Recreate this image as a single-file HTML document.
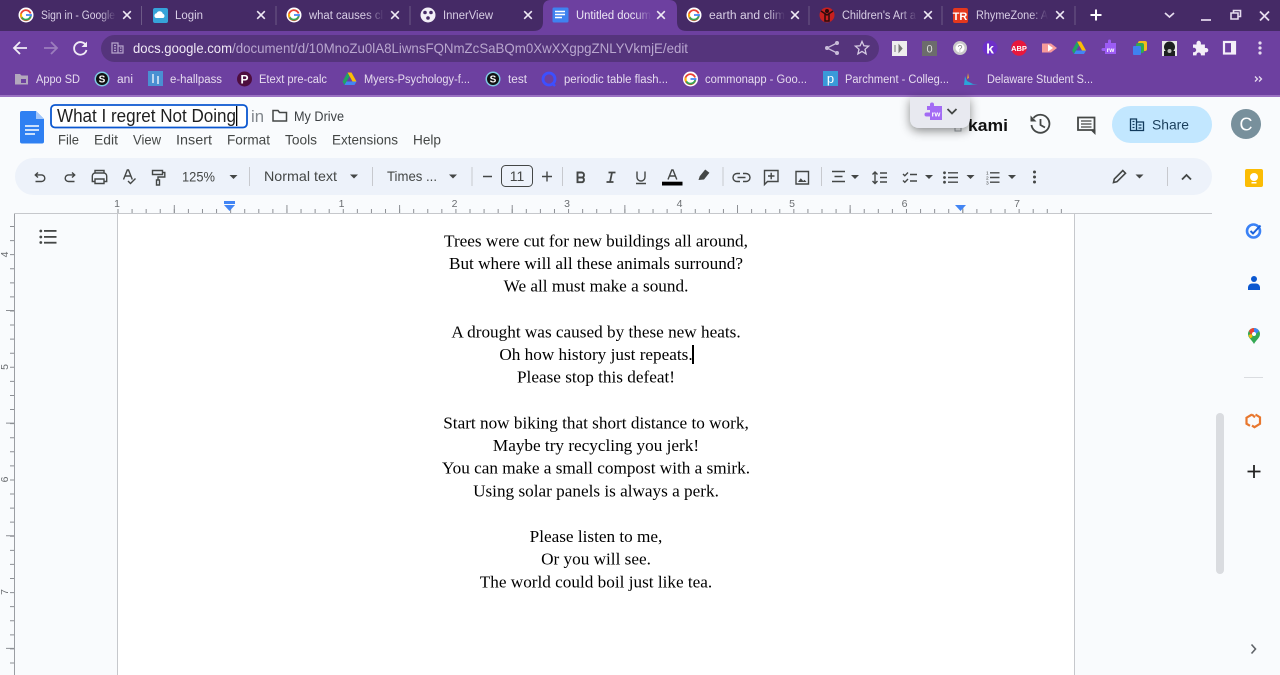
<!DOCTYPE html>
<html><head><meta charset="utf-8"><title>What I regret Not Doing</title>
<style>
html,body{margin:0;padding:0;width:1280px;height:675px;overflow:hidden;background:#f9fbfd}
svg{display:block;position:absolute;left:0;top:0}
text{font-family:"Liberation Sans",sans-serif}
.tab{fill:#d9cfe6;font-size:11.5px}
.bm{fill:#e6dcef;font-size:11.5px}
.menu{fill:#444746;font-size:14px}
.tb{fill:#444746;font-size:14px}
.ic{fill:none;stroke:#444746;stroke-width:1.4}
.x{stroke:#efe9f5;stroke-width:1.6;fill:none}
.sep{stroke:#6d5a86;stroke-width:1}
.tsep{stroke:#c7c9ce;stroke-width:1}
.car{fill:#444746}
.doc text{font-family:"Liberation Serif",serif;font-size:17.2px;fill:#000;text-anchor:middle}
.rn{fill:#6b6e72;font-size:10.5px;text-anchor:middle}
</style></head><body>
<svg width="1280" height="675" viewBox="0 0 1280 675" xmlns="http://www.w3.org/2000/svg">
<defs>
<linearGradient id="f1" x1="0" x2="1" y1="0" y2="0"><stop offset="0" stop-color="#452a66" stop-opacity="0"/><stop offset="1" stop-color="#452a66"/></linearGradient>
<linearGradient id="f2" x1="0" x2="1" y1="0" y2="0"><stop offset="0" stop-color="#6d40a0" stop-opacity="0"/><stop offset="1" stop-color="#6d40a0"/></linearGradient>
<filter id="sh" x="-40%" y="-40%" width="180%" height="200%"><feDropShadow dx="0" dy="3" stdDeviation="5" flood-color="#000" flood-opacity=".45"/></filter>
<g id="gl"><circle cx="0" cy="0" r="7.5" fill="#fff"/><path d="M4.6-1.5A5 5 0 1 0 4.8 1" fill="none" stroke="#ea4335" stroke-width="1.8"/><path d="M-4.7-1.4A5 5 0 0 0-4.2 2.4" fill="none" stroke="#fbbc05" stroke-width="1.8"/><path d="M-4.2 2.4A5 5 0 0 0 4.7 1.2" fill="none" stroke="#34a853" stroke-width="1.8"/><path d="M0 0H5V1.2" fill="none" stroke="#4285f4" stroke-width="1.8"/></g>
<g id="sch"><circle r="7.5" fill="#7ec8e3"/><circle r="6" fill="#111"/><text x="0" y="3.5" font-size="10" font-weight="bold" fill="#fff" text-anchor="middle">S</text></g>
<g id="x"><path class="x" d="M-3.8-3.8L3.8 3.8M3.8-3.8L-3.8 3.8"/></g>
<path id="c" d="M-4-2H4L0 2Z"/>
<g id="dr"><path d="M-2-6.5H2L7 2.5H3Z" fill="#fbbc05"/><path d="M-2-6.5L-7 2.5L-5 6L0-2.5Z" fill="#1fa463"/><path d="M-5 6H5L7 2.5H-3Z" fill="#4285f4"/></g>
</defs>

<!-- chrome -->
<rect width="1280" height="31" fill="#452a66"/>
<rect y="31" width="1280" height="65" fill="#6d40a0"/>
<rect y="95" width="1280" height="2" fill="#9a72c2"/>
<path d="M533 31Q543 31 543 22V8Q543 0 551 0H669Q677 0 677 8V22Q677 31 687 31Z" fill="#6d40a0"/>

<!-- tabs -->
<use href="#gl" x="26" y="15"/>
<text class="tab" x="41" y="19" textLength="74" lengthAdjust="spacingAndGlyphs">Sign in - Google</text><rect x="100" y="5" width="16" height="20" fill="url(#f1)"/>
<use href="#x" x="127" y="15"/><line class="sep" x1="141.5" y1="6" x2="141.5" y2="25"/>
<rect x="153" y="8" width="15" height="15" rx="2" fill="#36a3d9"/><path d="M156 18a2.5 2.5 0 0 1 .6-4.8 3.3 3.3 0 0 1 6.2.6 2.2 2.2 0 0 1 .2 4.2Z" fill="#fff"/>
<text class="tab" x="175" y="19" textLength="28" lengthAdjust="spacingAndGlyphs">Login</text>
<use href="#x" x="261" y="15"/><line class="sep" x1="276" y1="6" x2="276" y2="25"/>
<use href="#gl" x="294" y="15"/>
<text class="tab" x="309" y="19" textLength="74" lengthAdjust="spacingAndGlyphs">what causes cl</text><rect x="366" y="5" width="18" height="20" fill="url(#f1)"/>
<use href="#x" x="395" y="15"/><line class="sep" x1="410" y1="6" x2="410" y2="25"/>
<circle cx="428" cy="15" r="7.5" fill="#f2eef7"/><circle cx="425" cy="12.5" r="1.8" fill="#452a66"/><circle cx="431" cy="12.5" r="1.8" fill="#452a66"/><circle cx="428" cy="18" r="1.8" fill="#452a66"/>
<text class="tab" x="443" y="19" textLength="50" lengthAdjust="spacingAndGlyphs">InnerView</text>
<use href="#x" x="528" y="15"/>
<path d="M554 7.5h13a1.5 1.5 0 0 1 1.500 1.500v12a1.500 1.500 0 0 1-1.500 1.500h-13a1.500 1.500 0 0 1-1.500-1.500v-12a1.500 1.500 0 0 1 1.500-1.500Z" fill="#3f82f0"/><path d="M555 11.500h10M555 14.500h10M555 17.500h7" stroke="#fff" stroke-width="1.500"/>
<text class="tab" x="576" y="19" textLength="75" lengthAdjust="spacingAndGlyphs" style="fill:#eee7f5">Untitled docum</text><rect x="634" y="5" width="17" height="20" fill="url(#f2)"/>
<use href="#x" x="661" y="15"/>
<use href="#gl" x="694" y="15"/>
<text class="tab" x="709" y="19" textLength="76" lengthAdjust="spacingAndGlyphs">earth and clim</text><rect x="768" y="5" width="17" height="20" fill="url(#f1)"/>
<use href="#x" x="795" y="15"/><line class="sep" x1="809" y1="6" x2="809" y2="25"/>
<circle cx="827" cy="15" r="7.500" fill="#c8201f"/><circle cx="827" cy="11" r="2" fill="#2b0b0b"/><path d="M821 11L827 15L833 11M825 14V21H829V14" stroke="#2b0b0b" stroke-width="1.500" fill="none"/>
<text class="tab" x="842" y="19" textLength="74" lengthAdjust="spacingAndGlyphs">Children's Art a</text><rect x="900" y="5" width="17" height="20" fill="url(#f1)"/>
<use href="#x" x="928" y="15"/><line class="sep" x1="942" y1="6" x2="942" y2="25"/>
<rect x="953" y="8" width="15" height="15" rx="2" fill="#e5381d"/><text x="960" y="20" font-size="11" font-weight="bold" fill="#fff" text-anchor="middle">TR</text>
<text class="tab" x="976" y="19" textLength="72" lengthAdjust="spacingAndGlyphs">RhymeZone: A</text><rect x="1030" y="5" width="18" height="20" fill="url(#f1)"/>
<use href="#x" x="1060" y="15"/><line class="sep" x1="1075" y1="6" x2="1075" y2="25"/>
<path d="M1096 9.500V20.500M1090.500 15H1101.500" stroke="#fff" stroke-width="2" fill="none"/>
<path d="M1165 13L1169.500 17L1174 13" stroke="#e6dcef" stroke-width="1.700" fill="none"/>
<path d="M1201 20H1211" stroke="#e6dcef" stroke-width="1.700"/>
<path d="M1231 13h7v6h-7ZM1233.500 13v-2.500h7v6h-2.500" stroke="#e6dcef" stroke-width="1.600" fill="none"/>
<path d="M1260 11.500L1269 20.500M1269 11.500L1260 20.500" stroke="#e6dcef" stroke-width="1.800"/>

<!-- omnibar -->
<path d="M27 48H14M20 42L14 48L20 54" stroke="#f1ecf6" stroke-width="1.800" fill="none"/>
<path d="M57 48H44M51 42L57 48L51 54" stroke="#9c7dbd" stroke-width="1.800" fill="none"/>
<path d="M86 45.500A6.300 6.300 0 1 0 86.500 50" stroke="#f1ecf6" stroke-width="1.800" fill="none"/><path d="M87 41.500V47H81.500Z" fill="#f1ecf6"/>
<rect x="101" y="35" width="778" height="27" rx="13.500" fill="#55347c"/>
<path d="M112 43H118V53H112ZM118 46H123V53H118ZM114 45.500h2M114 48h2M114 50.500h2M120 48h1.500M120 50.500h1.500" stroke="#b7a5cc" stroke-width="1.200" fill="none"/>
<text x="133" y="53" font-size="14" fill="#f0e9f6" textLength="99" lengthAdjust="spacingAndGlyphs">docs.google.com</text>
<text x="232" y="53" font-size="14" fill="#b9a7cf" textLength="456" lengthAdjust="spacingAndGlyphs">/document/d/10MnoZu0lA8LiwnsFQNmZcSaBQm0XwXXgpgZNLYVkmjE/edit</text>
<g fill="#c9bcd9"><circle cx="827" cy="48" r="2"/><circle cx="837" cy="43" r="2"/><circle cx="837" cy="53" r="2"/></g><path d="M837 43L827 48L837 53" stroke="#c9bcd9" stroke-width="1.300" fill="none"/>
<path d="M862 41.500l1.900 4.300 4.700.4-3.600 3.100 1.100 4.600-4.100-2.500-4.100 2.500 1.100-4.600-3.600-3.100 4.700-.4Z" stroke="#d5cae2" stroke-width="1.300" fill="none"/>

<!-- extensions -->
<rect x="892" y="41" width="15" height="15" fill="#eee"/><path d="M895 45v7M899 45v7l3-3.500z" stroke="#777" fill="#777"/>
<rect x="922" y="41" width="15" height="15" fill="#6c6c6c"/><text x="929.500" y="52.500" font-size="11" fill="#ddd" text-anchor="middle">0</text>
<circle cx="960" cy="48" r="7" fill="#c9c9c9"/><circle cx="960" cy="48" r="4.500" fill="#fff"/><text x="960" y="51.500" font-size="9" fill="#888" text-anchor="middle">?</text>
<circle cx="990" cy="48" r="7.500" fill="#6d2fc9"/><text x="990" y="53.500" font-size="14" font-weight="bold" fill="#fff" text-anchor="middle">k</text>
<circle cx="1019" cy="48" r="7.800" fill="#e8183d"/><text x="1019" y="51" font-size="7.500" font-weight="bold" fill="#fff" text-anchor="middle">ABP</text>
<path d="M1042 43.500H1051L1057 48L1051 52.500H1042Z" fill="#f79a9a"/><path d="M1048 44.500L1053 48L1048 51.500Z" fill="#fff"/>
<use href="#dr" x="1079" y="48"/>
<path d="M1105 43h3v-2a1.500 1.500 0 0 1 3 0v2h5v11h-11v-3h-2a1.500 1.500 0 0 1 0-3h2Z" fill="#9c5cf5"/><text x="1110.500" y="52" font-size="6.500" font-weight="bold" fill="#fff" text-anchor="middle">rw</text>
<rect x="1138" y="41" width="9" height="10" rx="2" fill="#f2bc1b"/><rect x="1136" y="43" width="8" height="10" rx="2" fill="#32a852"/><rect x="1133" y="46" width="8" height="9" rx="1" fill="#3f82f0"/>
<rect x="1162" y="41" width="15" height="15" fill="#e8e8e8"/><circle cx="1169.500" cy="47" r="5.500" fill="#1c2020"/><path d="M1164 56v-5h11v5Z" fill="#1c2020"/><circle cx="1169.500" cy="51" r="2" fill="#bbb"/>
<path d="M1193 44.500h3.500v-1.500a2.200 2.200 0 0 1 4.400 0v1.500h4v3.500h1.200a2.200 2.200 0 0 1 0 4.400h-1.200v3h-4v-.7a2.200 2.200 0 0 0-4.400 0v.7h-3.500v-3.200h1a2.200 2.200 0 0 0 0-4.400h-1Z" fill="#f4eff8"/>
<rect x="1224" y="42" width="11" height="11.500" fill="none" stroke="#f4eff8" stroke-width="2.200"/><rect x="1231" y="42" width="4" height="11.500" fill="#f4eff8"/>
<g fill="#e6dcef"><circle cx="1260" cy="43" r="1.600"/><circle cx="1260" cy="48" r="1.600"/><circle cx="1260" cy="53" r="1.600"/></g>

<!-- bookmarks -->
<path d="M15 74h5l1.500 1.500H28v9H15Z" fill="#b3a8bd"/><path d="M21 79h5v4h-5Z" fill="#6d40a0"/>
<text class="bm" x="36" y="83" textLength="44" lengthAdjust="spacingAndGlyphs">Appo SD</text>
<use href="#sch" x="102" y="79"/><text class="bm" x="117" y="83" textLength="16" lengthAdjust="spacingAndGlyphs">ani</text>
<rect x="148" y="71" width="15" height="15" fill="#4a90d2"/><path d="M153 74v9M158 76v8" stroke="#e5eef7" stroke-width="1.500"/>
<text class="bm" x="170" y="83" textLength="52" lengthAdjust="spacingAndGlyphs">e-hallpass</text>
<circle cx="244.500" cy="79" r="7.500" fill="#4e0d3e"/><text x="244.500" y="83.500" font-size="12" font-weight="bold" fill="#fff" text-anchor="middle">P</text>
<text class="bm" x="259" y="83" textLength="68" lengthAdjust="spacingAndGlyphs">Etext pre-calc</text>
<use href="#dr" x="349.500" y="79"/>
<text class="bm" x="364" y="83" textLength="106" lengthAdjust="spacingAndGlyphs">Myers-Psychology-f...</text>
<use href="#sch" x="493" y="79"/><text class="bm" x="508" y="83" textLength="19" lengthAdjust="spacingAndGlyphs">test</text>
<circle cx="549" cy="79" r="6" fill="none" stroke="#3d4fff" stroke-width="2.800"/><path d="M552 83l3 3" stroke="#3d4fff" stroke-width="2.500"/>
<text class="bm" x="564" y="83" textLength="104" lengthAdjust="spacingAndGlyphs">periodic table flash...</text>
<use href="#gl" x="690.500" y="79"/>
<text class="bm" x="705" y="83" textLength="102" lengthAdjust="spacingAndGlyphs">commonapp - Goo...</text>
<rect x="823" y="71" width="15" height="15" fill="#3a9ad9"/><text x="830.500" y="83" font-size="13" fill="#fff" text-anchor="middle">p</text>
<text class="bm" x="845" y="83" textLength="104" lengthAdjust="spacingAndGlyphs">Parchment - Colleg...</text>
<path d="M965 76l2 5 6 3h5l-8 1h-6Z" fill="#2aa5d9"/><path d="M968 73l1 5-2 1Z" fill="#e9a23b"/>
<text class="bm" x="987" y="83" textLength="106" lengthAdjust="spacingAndGlyphs">Delaware Student S...</text>
<path d="M1255 76.500l2.500 2.500-2.500 2.500M1259 76.500l2.500 2.500-2.500 2.500" stroke="#e6dcef" stroke-width="1.300" fill="none"/>

<!-- docs header -->
<path d="M22 111h14l8 8v22.500a2 2 0 0 1-2 2H22a2 2 0 0 1-2-2V113a2 2 0 0 1 2-2Z" fill="#2f80f2"/><path d="M36 111l8 8h-8Z" fill="#a3c7fa"/><path d="M25 126h14M25 130h14M25 134h10" stroke="#fff" stroke-width="1.600"/>
<rect x="51" y="105" width="196" height="22.500" rx="4" fill="#fff" stroke="#0b57d0" stroke-width="1.800"/>
<text x="57" y="122" font-size="18" fill="#1f1f1f" textLength="179" lengthAdjust="spacingAndGlyphs">What I regret Not Doing</text>
<rect x="236" y="106" width="1.300" height="20" fill="#000"/>
<text x="251" y="122" font-size="17" fill="#80868b" textLength="13" lengthAdjust="spacingAndGlyphs">in</text>
<path d="M273 110.500h5l1.500 2h7v8.500h-13.500Z" fill="none" stroke="#444746" stroke-width="1.500"/>
<text x="294" y="121" font-size="14" fill="#3c4043" textLength="50" lengthAdjust="spacingAndGlyphs">My Drive</text>
<g class="menu">
<text x="58" y="144.500" textLength="21" lengthAdjust="spacingAndGlyphs">File</text>
<text x="94" y="144.500" textLength="24" lengthAdjust="spacingAndGlyphs">Edit</text>
<text x="133" y="144.500" textLength="28" lengthAdjust="spacingAndGlyphs">View</text>
<text x="176" y="144.500" textLength="36" lengthAdjust="spacingAndGlyphs">Insert</text>
<text x="227" y="144.500" textLength="43" lengthAdjust="spacingAndGlyphs">Format</text>
<text x="285" y="144.500" textLength="32" lengthAdjust="spacingAndGlyphs">Tools</text>
<text x="332" y="144.500" textLength="66" lengthAdjust="spacingAndGlyphs">Extensions</text>
<text x="413" y="144.500" textLength="28" lengthAdjust="spacingAndGlyphs">Help</text>
</g>

<!-- kami + popup -->
<rect x="955" y="124" width="6" height="7" fill="none" stroke="#9aa0a6"/>
<text x="968" y="131" font-size="16.500" font-weight="bold" fill="#111" textLength="40" lengthAdjust="spacingAndGlyphs">kami</text>
<path d="M910 97H970V118Q970 128 960 128H920Q910 128 910 118Z" fill="#e8e9f0" filter="url(#sh)"/>
<path d="M927 106h3v-1.500a2 2 0 0 1 4 0V106h8v14h-12v-3.500h-3.500a2 2 0 0 1 0-4H930V110h-3Z" fill="#a36bf4"/><text x="936" y="116.500" font-size="7.500" font-weight="bold" fill="#fff" text-anchor="middle">rw</text>
<path d="M947.500 109L952 113.500L956.500 109" stroke="#444746" stroke-width="1.800" fill="none"/>
<!-- history -->
<path d="M1033.500 118A9 9 0 1 1 1031.500 125" fill="none" stroke="#444746" stroke-width="1.800"/><path d="M1030.500 115.500v6h6Z" fill="#444746"/><path d="M1040.500 119v6l4.500 2.500" stroke="#444746" stroke-width="1.800" fill="none"/>
<!-- comments -->
<path d="M1078 117.500h16.500v12.500h-16.500Z" fill="none" stroke="#444746" stroke-width="1.800"/><path d="M1081 121h10.500M1081 124h10.500M1081 127h10.500" stroke="#444746" stroke-width="1.300"/><path d="M1090 129.500h5.500v5.500Z" fill="#444746"/>
<!-- share -->
<rect x="1112" y="106" width="100" height="37" rx="18.500" fill="#c2e7ff"/>
<path d="M1130.500 119h6v11.500h-6ZM1136.500 122h7v8.500h-7ZM1132.500 121.500h2M1132.500 124.500h2M1132.500 127.500h2M1138.500 125h3M1138.500 128h3" fill="none" stroke="#103a5c" stroke-width="1.300"/>
<text x="1152" y="129.500" font-size="14" fill="#1a3f5c" textLength="37" lengthAdjust="spacingAndGlyphs">Share</text>
<circle cx="1246" cy="124" r="15" fill="#78909c"/><text x="1246" y="130.500" font-size="18" fill="#fff" text-anchor="middle">C</text>

<!-- toolbar -->
<rect x="15" y="158" width="1197" height="37" rx="18.500" fill="#edf2fa"/>
<g class="ic">
<path d="M35.500 181.500h6a3.300 3.300 0 0 0 0-6.600H35.500M38 172.500L35.300 175L38 177.500"/>
<path d="M74.500 181.500h-6a3.300 3.300 0 0 1 0-6.600H74.500M72 172.500L74.700 175L72 177.500"/>
<path d="M95 173v-2.500h9V173M95 181.500h-2.700v-5.500a3 3 0 0 1 3-3h8.400a3 3 0 0 1 3 3v5.500H104M95 179h9v4.500h-9Z"/>
<path d="M123.500 179.500l3.800-9.500h1.200l3.800 9.500M125 176h6M128 181l2.500 2.500 5-5"/>
<path d="M152.500 170.500h10v4h-10ZM162.500 172.500h2.300v4.500h-6.800v3M156.500 180h3v5h-3Z"/>
<path d="M483 176.500h9M542 176.500h10M547 171.500v10"/>
<path d="M577.500 172.500h4a2.500 2.500 0 0 1 0 5h-4ZM577.500 177.500h4.800a2.500 2.500 0 0 1 0 4.700h-4.800Z" stroke-width="1.900"/>
<path d="M608.500 172.500h7M606.500 182h7M612 172.500L610 182" stroke-width="1.800"/>
<path d="M637 171.500v5.500a4 4 0 0 0 8 0v-5.500M636 183.500h10"/>
<path d="M668 179.500l3.800-9.500h1.200l3.800 9.500M669.500 176h5.800"/>
<path d="M740 173.500h-3a4 4 0 0 0 0 8h3M743 173.500h3a4 4 0 0 1 0 8h-3M737.500 177.500h8"/>
<path d="M764.500 170.500h13.500v11H767.500l-3 3ZM771.200 172.800v6.500M768 176h6.500"/>
<path d="M796 171.500h12.500v12.500h-12.500Z"/>
<path d="M872.500 174.500l2.500-2.500 2.500 2.500M875 172v11M872.500 181l2.500 2.500 2.500-2.500M880 173h7M880 177.500h7M880 182h7"/>
<path d="M903 174l1.800 1.800 3.200-3.300M903 180.500l1.800 1.800 3.200-3.300M910 174.500h7M910 181h7"/>
<path d="M948 172.800h10M948 177.500h10M948 182.200h10"/>
<path d="M990 172.800h9.500M990 177.500h9.500M990 182.200h9.500"/>
<path d="M832 171.500h13M834.500 176.500h8M832 181.500h13"/>
<path d="M1182 179.500L1186.500 175L1191 179.500" stroke-width="1.800"/>
</g>
<path d="M798 182l2.800-3.800 2.400 2.800 1.300-1.300 2 2.300Z" fill="#444746"/>
<g class="car"><circle cx="944.500" cy="172.800" r="1.400"/><circle cx="944.500" cy="177.500" r="1.400"/><circle cx="944.500" cy="182.200" r="1.400"/><circle cx="1034.500" cy="172" r="1.500"/><circle cx="1034.500" cy="177" r="1.500"/><circle cx="1034.500" cy="182" r="1.500"/></g>
<text x="986" y="174.500" font-size="4.800" fill="#444746">1</text><text x="986" y="179.500" font-size="4.800" fill="#444746">2</text><text x="986" y="184.500" font-size="4.800" fill="#444746">3</text>
<path d="M698.500 180l1.200-3.800 5.500-6.700 4.200 3.200-5.400 6.800Z" fill="#444746"/>
<rect x="662" y="181.700" width="20.500" height="3.800" fill="#000"/>
<text class="tb" x="182" y="181.500" textLength="33" lengthAdjust="spacingAndGlyphs">125%</text>
<text class="tb" x="264" y="181" textLength="73" lengthAdjust="spacingAndGlyphs">Normal text</text>
<text class="tb" x="387" y="181" textLength="50" lengthAdjust="spacingAndGlyphs">Times ...</text>
<rect x="501.500" y="165.500" width="31" height="21" rx="4" fill="none" stroke="#444746" stroke-width="1"/>
<text class="tb" x="517" y="181" text-anchor="middle">11</text>
<g class="car"><use href="#c" x="233.500" y="177"/><use href="#c" x="354" y="176.500"/><use href="#c" x="453" y="176.500"/><use href="#c" x="855" y="177"/><use href="#c" x="929" y="177"/><use href="#c" x="970.500" y="177"/><use href="#c" x="1012" y="177"/><use href="#c" x="1139.500" y="176.500"/></g>
<g class="tsep"><line x1="249.500" y1="167" x2="249.500" y2="186"/><line x1="372.500" y1="167" x2="372.500" y2="186"/><line x1="472" y1="167" x2="472" y2="186"/><line x1="562.500" y1="167" x2="562.500" y2="186"/><line x1="723" y1="167" x2="723" y2="186"/><line x1="821.500" y1="167" x2="821.500" y2="186"/><line x1="1167.500" y1="167" x2="1167.500" y2="186"/></g>
<path d="M1113.500 182.500l.8-3.500 8.500-8.500 2.700 2.700-8.500 8.500Z" fill="none" stroke="#444746" stroke-width="1.600"/>

<!-- page -->
<rect x="118" y="213" width="956" height="462" fill="#fff"/>
<path d="M117.500 213V675M1074.500 213V675" stroke="#c6c8cc" stroke-width="1"/>
<path d="M14.500 213V675" stroke="#9b9ea3" stroke-width="1"/>
<path d="M14 213.500H1212" stroke="#c6c8cc" stroke-width="1"/>

<!-- h ruler -->
<line x1="117.500" y1="211" x2="1074" y2="211" stroke="#8d9095" stroke-width="4" stroke-dasharray="1 13.080"/>
<line x1="173.800" y1="209" x2="1074" y2="209" stroke="#8d9095" stroke-width="8" stroke-dasharray="1 111.640"/>
<g class="rn">
<text x="117" y="207">1</text><text x="341.500" y="207">1</text><text x="454.500" y="207">2</text><text x="567" y="207">3</text><text x="679.500" y="207">4</text><text x="792" y="207">5</text><text x="904.500" y="207">6</text><text x="1017" y="207">7</text>
</g>
<rect x="224" y="201" width="11" height="3" fill="#4285f4"/><path d="M224 205H235L229.500 211Z" fill="#4285f4"/>
<path d="M955 205H966L960.500 211Z" fill="#4285f4"/>

<!-- v ruler -->
<line x1="12" y1="226" x2="12" y2="675" stroke="#8d9095" stroke-width="4" stroke-dasharray="1 13.080"/>
<line x1="10" y1="310" x2="10" y2="675" stroke="#8d9095" stroke-width="8" stroke-dasharray="1 111.640"/>
<g class="rn"><text transform="translate(8,254.500) rotate(-90)">4</text><text transform="translate(8,367) rotate(-90)">5</text><text transform="translate(8,479.500) rotate(-90)">6</text><text transform="translate(8,592) rotate(-90)">7</text></g>

<!-- outline icon -->
<g fill="#444746"><circle cx="40.800" cy="231" r="1.400"/><circle cx="40.800" cy="237" r="1.400"/><circle cx="40.800" cy="242.500" r="1.400"/><rect x="44" y="230" width="12.500" height="1.800"/><rect x="44" y="236" width="12.500" height="1.800"/><rect x="44" y="241.800" width="12.500" height="1.800"/></g>

<!-- doc text -->
<g class="doc">
<text x="596" y="246.500">Trees were cut for new buildings all around,</text>
<text x="596" y="269">But where will all these animals surround?</text>
<text x="596" y="291.500">We all must make a sound.</text>
<text x="596" y="337.500">A drought was caused by these new heats.</text>
<text x="596" y="360">Oh how history just repeats.</text>
<text x="596" y="382.500">Please stop this defeat!</text>
<text x="596" y="428.500">Start now biking that short distance to work,</text>
<text x="596" y="451">Maybe try recycling you jerk!</text>
<text x="596" y="473.500">You can make a small compost with a smirk.</text>
<text x="596" y="496.500">Using solar panels is always a perk.</text>
<text x="596" y="542">Please listen to me,</text>
<text x="596" y="564.500">Or you will see.</text>
<text x="596" y="587.500">The world could boil just like tea.</text>
</g>
<rect x="692" y="345" width="2" height="19" fill="#000"/>

<!-- side panel -->
<rect x="1216" y="413" width="8" height="161" rx="4" fill="#dadce0"/>
<rect x="1245" y="169" width="18" height="18" rx="2" fill="#fbbc04"/><circle cx="1254" cy="177" r="4" fill="#fff"/><rect x="1251.500" y="182" width="5" height="1.500" fill="#fff"/>
<circle cx="1253.500" cy="231" r="6.500" fill="none" stroke="#3b82f6" stroke-width="2.600"/><path d="M1250.500 231l2.500 2.500 7.500-8" stroke="#1a62dc" stroke-width="2" fill="none"/>
<circle cx="1254" cy="279" r="3" fill="#0b57d0"/><path d="M1248 290v-3a4 4 0 0 1 4-3.500h4a4 4 0 0 1 4 3.500v3Z" fill="#0b57d0"/>
<path d="M1254 344c-2-4-6-6-6-10a6 6 0 0 1 12 0c0 4-4 6-6 10Z" fill="#34a853"/><path d="M1249 331a6 6 0 0 1 5-3v4l-3 3Z" fill="#ea4335"/><path d="M1254 328a6 6 0 0 1 5 3l-3 3-2-2Z" fill="#4285f4"/><path d="M1248.500 335l3-1 1 3-2.500 1.500Z" fill="#fbbc04"/><circle cx="1254" cy="334" r="2" fill="#fff"/>
<line x1="1244" y1="377.500" x2="1263" y2="377.500" stroke="#dadce0"/>
<path d="M1252 414.500l-5.500 3.200v6l3.500 2.100M1255.500 414.500l4.500 2.800v6.500l-5.500 3.400-2.500-1.600M1252 414.500l3 2.800" fill="none" stroke="#e8772e" stroke-width="2.200"/>
<path d="M1254 465V478M1247.500 471.500H1260.500" stroke="#222" stroke-width="1.800"/>
<path d="M1251.500 644.500L1255.500 649L1251.500 653.500" stroke="#5f6368" stroke-width="1.600" fill="none"/>
</svg>
</body></html>
